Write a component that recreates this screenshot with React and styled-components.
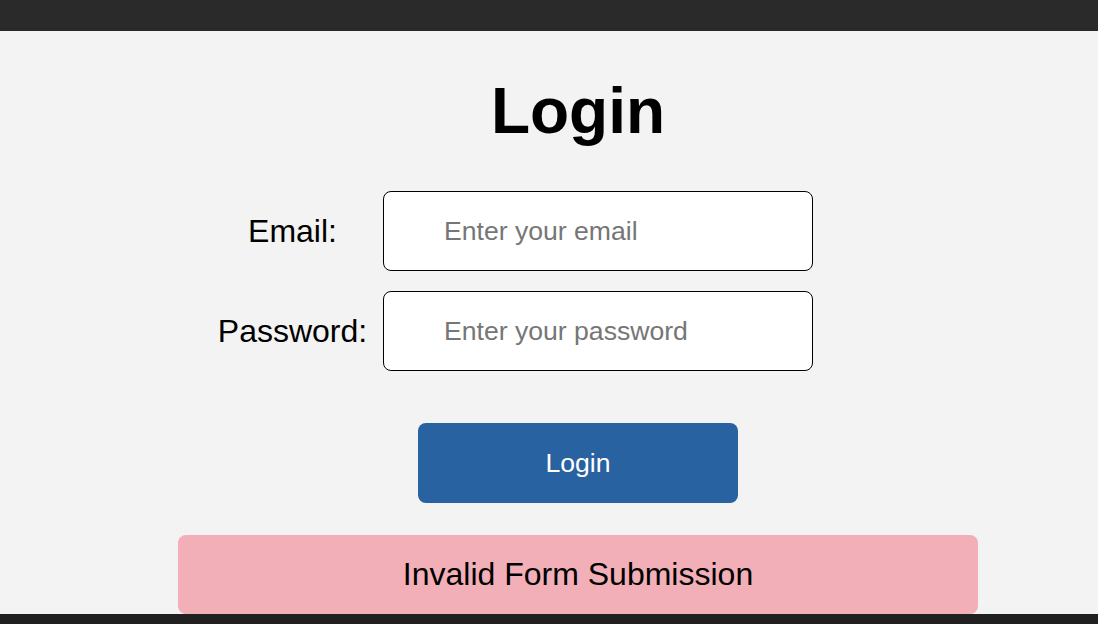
import React from 'react';
import styled, { createGlobalStyle } from 'styled-components';

const GlobalStyle = createGlobalStyle`
  html, body {
    margin: 0;
    padding: 0;
    background: #f3f3f3;
    font-family: "Liberation Sans", Arial, sans-serif;
  }
`;

const TopBar = styled.header`
  height: 31px;
  background: #2a2a2a;
`;

const Footer = styled.footer`
  position: fixed;
  left: 0;
  right: 0;
  bottom: 0;
  height: 10px;
  background: #202020;
`;

const Main = styled.main`
  display: flex;
  justify-content: flex-start;
  padding: 43px 0 0 178px;
`;

const Card = styled.div`
  width: 800px;
  display: flex;
  flex-direction: column;
  align-items: center;
`;

const Title = styled.h1`
  margin: 0;
  font-size: 64px;
  line-height: 74px;
  font-weight: 700;
  color: #000;
`;

const Form = styled.form`
  width: 100%;
  display: flex;
  flex-direction: column;
  align-items: center;
  margin-top: 43px;
`;

const Row = styled.div`
  align-self: flex-start;
  margin-left: 24px;
  display: flex;
  align-items: center;
  margin-bottom: ${p => p.$gap || 20}px;
`;

const Label = styled.label`
  width: 181px;
  text-align: center;
  font-size: 32px;
  color: #000;
`;

const Input = styled.input`
  box-sizing: border-box;
  width: 430px;
  height: 80px;
  border: 1px solid #000;
  border-radius: 8px;
  background: #fff;
  padding: 0 0 0 60px;
  font-family: inherit;
  font-size: 26.6px;
  color: #000;
  outline: none;
  &::placeholder {
    color: #767676;
  }
`;

const Button = styled.button`
  margin-top: 32px;
  width: 320px;
  height: 80px;
  border: none;
  border-radius: 8px;
  background: #2862a0;
  color: #fff;
  font-family: inherit;
  font-size: 26.6px;
  cursor: pointer;
`;

const ErrorBox = styled.div`
  box-sizing: border-box;
  margin-top: 32px;
  width: 800px;
  height: 79px;
  border-radius: 8px;
  background: #f3afb8;
  display: flex;
  align-items: center;
  justify-content: center;
  font-size: 32px;
  color: #000;
`;

const App = () => (
  <>
    <GlobalStyle />
    <TopBar />
    <Main>
      <Card>
        <Title>Login</Title>
        <Form onSubmit={e => e.preventDefault()}>
          <Row>
            <Label htmlFor="email">Email:</Label>
            <Input id="email" type="email" placeholder="Enter your email" />
          </Row>
          <Row $gap={0}>
            <Label htmlFor="password">Password:</Label>
            <Input id="password" type="password" placeholder="Enter your password" />
          </Row>
          <Button type="submit">Login</Button>
        </Form>
        <ErrorBox>Invalid Form Submission</ErrorBox>
      </Card>
    </Main>
    <Footer />
  </>
);

export default App;
